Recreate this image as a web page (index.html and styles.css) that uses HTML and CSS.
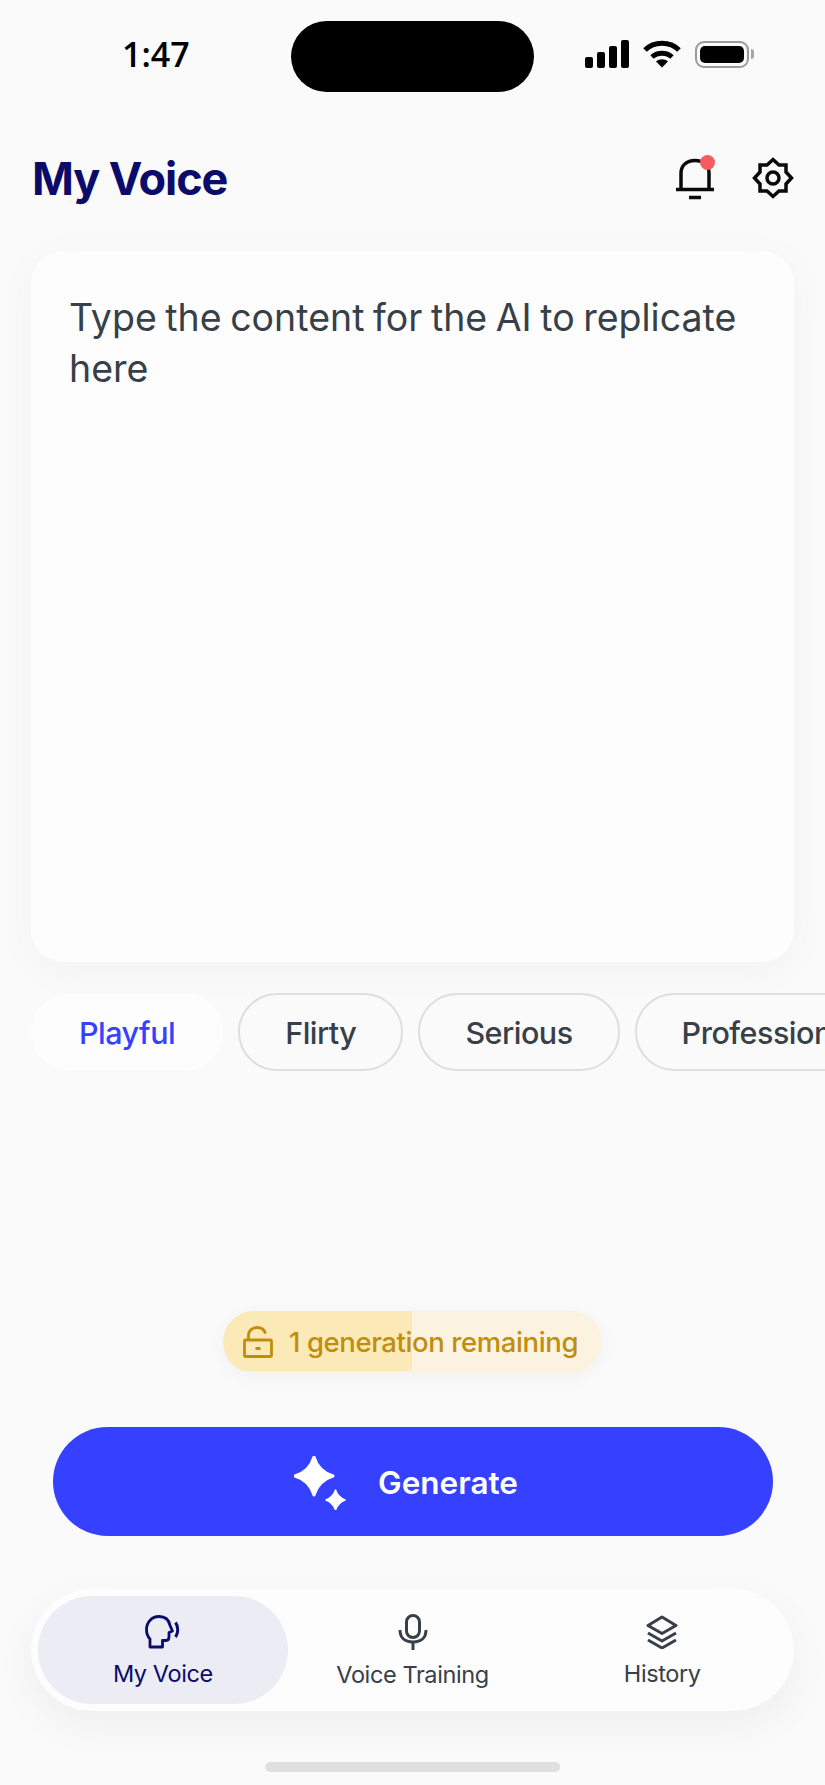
FILE: index.html
```html
<!DOCTYPE html>
<html lang="en">
<head>
    <meta charset="UTF-8">
    <meta name="viewport" content="width=device-width, initial-scale=1.0">
    <title>My Voice</title>
    <link rel="stylesheet" href="styles.css">
</head>
<body>
    <div class="screen">
        <div class="status-bar">
            <span class="time">1:47</span>
            <div class="island"></div>
            <div class="status-icons">
                <svg width="44" height="28" viewBox="0 0 44 28">
                    <rect x="0" y="17" width="8" height="11" rx="2"/>
                    <rect x="12" y="12" width="8" height="16" rx="2"/>
                    <rect x="24" y="6" width="8" height="22" rx="2"/>
                    <rect x="36" y="0" width="8" height="28" rx="2"/>
                </svg>
                <svg class="wifi" width="38" height="28" viewBox="0 0 38 28" fill="none" stroke="#000" stroke-width="5">
                    <path d="M2 10C11 1 27 1 36 10"/>
                    <path d="M9 17C14.500 12 23.500 12 29 17"/>
                    <path d="M13 21.500L19 27.500L25 21.500C21.500 18.500 16.500 18.500 13 21.500Z" fill="#000" stroke="none"/>
                </svg>
                <div class="battery"><div class="battery-fill"></div></div>
                <div class="battery-cap"></div>
            </div>
        </div>

        <header class="top-bar">
            <h1 class="title">My Voice</h1>
            <div class="top-actions">
                <div class="bell">
                    <svg width="40" height="44" viewBox="0 0 40 44" fill="none" stroke="#0a0a0a" stroke-width="3.500">
                        <path d="M6 33V17C6 9.500 11.500 4.500 20 4.500C28.500 4.500 34 9.500 34 17V33"/>
                        <path d="M1 33.500H39"/>
                        <path d="M14 41.500H26"/>
                    </svg>
                    <span class="dot"></span>
                </div>
                <svg width="42" height="42" viewBox="0 0 42 42" fill="none" stroke="#0a0a0a" stroke-width="3.500" stroke-linejoin="miter">
                    <path d="M21 2.500L27 8H34V15L39.500 21L34 27V34H27L21 39.500L15 34H8V27L2.500 21L8 15V8H15Z"/>
                    <circle cx="21" cy="21" r="6"/>
                </svg>
            </div>
        </header>

        <div class="content-card">
            <p class="placeholder">Type the content for the AI to replicate here</p>
        </div>

        <div class="chips">
            <div class="chip active">Playful</div>
            <div class="chip">Flirty</div>
            <div class="chip">Serious</div>
            <div class="chip">Professional</div>
        </div>

        <div class="spacer"></div>

        <div class="quota">
            <div class="quota-fill"></div>
            <svg width="30" height="32" viewBox="0 0 30 32" fill="none" stroke="#c08d0c" stroke-width="2.800">
                <rect x="1.500" y="14" width="27" height="16.500" rx="1"/>
                <path d="M5.500 14V9.500C5.500 4.500 9.500 1.500 14 1.500C18.500 1.500 21.500 4 22.500 7.500"/>
                <path d="M12.500 22.500H17.500"/>
            </svg>
            <span class="quota-text">1 generation remaining</span>
        </div>

        <button class="generate">
            <svg width="52" height="54" viewBox="0 0 52 54" fill="#fff">
                <path d="M20 1C23 11 29 17 39 20C29 23 23 29 20 39C17 29 11 23 1 20C11 17 17 11 20 1Z" stroke="#fff" stroke-width="3" stroke-linejoin="round"/>
                <path d="M41.500 34C43 39 46 42 51 44C46 46 43 49 41.500 54C40 49 37 46 32 44C37 42 40 39 41.500 34Z" stroke="#fff" stroke-width="1.500" stroke-linejoin="round"/>
            </svg>
            <span>Generate</span>
        </button>

        <nav class="tab-bar">
            <div class="tab active">
                <svg width="36" height="34" viewBox="0 0 36 34" fill="none" stroke="#0b0b6b" stroke-width="2.800">
                    <path d="M5 24C2.500 21.500 1.500 18 1.500 14.500C1.500 7 7 1.500 14 1.500C20 1.500 24 5 25 10.500L27.500 16L24 17.500V22C24 24.500 23 25.500 21 25.500H17.500V32H5Z" stroke-linejoin="round"/>
                    <path d="M30.500 7.500C33.500 11.500 33.500 18 30.500 22" stroke-width="3"/>
                </svg>
                <span>My Voice</span>
            </div>
            <div class="tab">
                <svg width="30" height="36" viewBox="0 0 30 36" fill="none" stroke="#374048" stroke-width="3">
                    <rect x="8.500" y="1.500" width="13" height="22" rx="6.500"/>
                    <path d="M2 16C2 24 7 28 15 28C23 28 28 24 28 16"/>
                    <path d="M15 28V36"/>
                </svg>
                <span>Voice Training</span>
            </div>
            <div class="tab">
                <svg width="32" height="34" viewBox="0 0 32 34" fill="none" stroke="#374048" stroke-width="3" stroke-linejoin="round">
                    <path d="M16 2L30 10.500L16 18.500L2 10.500Z"/>
                    <path d="M2 18L16 26L30 18"/>
                    <path d="M2 25L16 33L30 25"/>
                </svg>
                <span>History</span>
            </div>
        </nav>

        <div class="home-bar"></div>
    </div>
</body>
</html>
```

FILE: styles.css
```css
* {
    box-sizing: border-box;
}
body {
    margin: 0;
    background-color: #fafafa;
    font-family: Inter, 'Open Sans', sans-serif;
    color: #374048;
}
.screen {
    width: 825px;
    height: 1785px;
    overflow: hidden;
    display: flex;
    flex-direction: column;
    padding-top: 21px;
}

/* status bar */
.status-bar {
    display: flex;
    align-items: center;
    height: 71px;
    padding-left: 122px;
}
.time {
    width: 169px;
    font-family: 'Open Sans', sans-serif;
    font-size: 34px;
    font-weight: 600;
    color: #000;
    margin-top: -5px;
}
.island {
    width: 243px;
    height: 71px;
    border-radius: 36px;
    background-color: #000;
}
.status-icons {
    display: flex;
    align-items: center;
    margin-left: 51px;
    margin-top: -5px;
}
.wifi {
    margin-left: 14px;
}
.battery {
    width: 54px;
    height: 27px;
    margin-left: 14px;
    padding: 3px;
    border: 2px solid #9a9a9a;
    border-radius: 9px;
}
.battery-fill {
    width: 100%;
    height: 100%;
    border-radius: 5px;
    background-color: #000;
}
.battery-cap {
    width: 3px;
    height: 10px;
    margin-left: 2px;
    border-radius: 0 3px 3px 0;
    background-color: #a5a5a5;
}

/* header */
.top-bar {
    display: flex;
    justify-content: space-between;
    align-items: center;
    height: 68px;
    margin-top: 52px;
    padding: 0 31px 0 32px;
}
.title {
    margin: 0;
    font-size: 45px;
    font-weight: 700;
    letter-spacing: -1.100px;
    color: #0b0b6b;
}
.top-actions {
    display: flex;
    align-items: center;
    gap: 37px;
}
.bell {
    position: relative;
    display: flex;
}
.dot {
    position: absolute;
    top: -1px;
    right: 0;
    width: 15px;
    height: 15px;
    border-radius: 50%;
    background-color: #f55b5f;
}

/* text card */
.content-card {
    width: 763px;
    height: 711px;
    margin: 39px 0 0 31px;
    padding: 41px 38px;
    border-radius: 32px;
    background-color: #fdfdfd;
    box-shadow: 0 8px 40px rgba(0, 0, 0, 0.035);
}
.placeholder {
    margin: 0;
    font-size: 37.500px;
    line-height: 51px;
    word-spacing: -2px;
    color: #374048;
}

/* tone chips */
.chips {
    display: flex;
    gap: 15px;
    margin-top: 31px;
    padding-left: 31px;
}
.chip {
    flex: none;
    height: 78px;
    padding: 0 45px;
    display: flex;
    align-items: center;
    border: 2px solid #dedede;
    border-radius: 39px;
    font-size: 30.500px;
    font-weight: 500;
    letter-spacing: -0.5px;
}
.chip.active {
    padding: 0 48px;
    border: none;
    background-color: #fdfdfd;
    color: #3640ff;
}
.spacer {
    flex: 1;
}

/* generations left */
.quota {
    position: relative;
    display: flex;
    align-items: center;
    gap: 16px;
    width: 379px;
    height: 62px;
    margin: 0 auto;
    padding-left: 20px;
    overflow: hidden;
    border-radius: 31px;
    background-color: #fbf3e0;
    box-shadow: 0 4px 16px rgba(60, 70, 120, 0.05);
}
.quota-fill {
    position: absolute;
    left: 0;
    top: 0;
    width: 189px;
    height: 60px;
    background-color: #fbe9b7;
}
.quota svg,
.quota-text {
    position: relative;
}
.quota-text {
    font-size: 27.500px;
    font-weight: 500;
    letter-spacing: -0.4px;
    color: #c08d0c;
    white-space: nowrap;
}

/* main button */
.generate {
    display: flex;
    justify-content: center;
    align-items: center;
    gap: 32px;
    width: 720px;
    height: 109px;
    margin: 54px 0 0 53px;
    padding: 2px 14px 0 0;
    border: none;
    border-radius: 55px;
    background-color: #3640ff;
    color: #ffffff;
    font-family: inherit;
    font-size: 31.500px;
    font-weight: 600;
}

/* bottom tabs */
.tab-bar {
    display: flex;
    width: 763px;
    height: 122px;
    margin: 53px 0 0 31px;
    padding: 7px;
    border-radius: 61px;
    background-color: #fdfdfd;
    box-shadow: 0 14px 40px rgba(0, 0, 0, 0.05);
}
.tab {
    flex: 1;
    display: flex;
    flex-direction: column;
    align-items: center;
    justify-content: center;
    gap: 10px;
    padding-top: 3px;
    border-radius: 54px;
    font-size: 23.500px;
    letter-spacing: -0.4px;
}
.tab.active {
    background-color: #ecedf4;
    color: #0b0b6b;
}
.home-bar {
    width: 295px;
    height: 10px;
    margin: 51px auto 13px;
    border-radius: 5px;
    background-color: #e0e0e0;
}
```
